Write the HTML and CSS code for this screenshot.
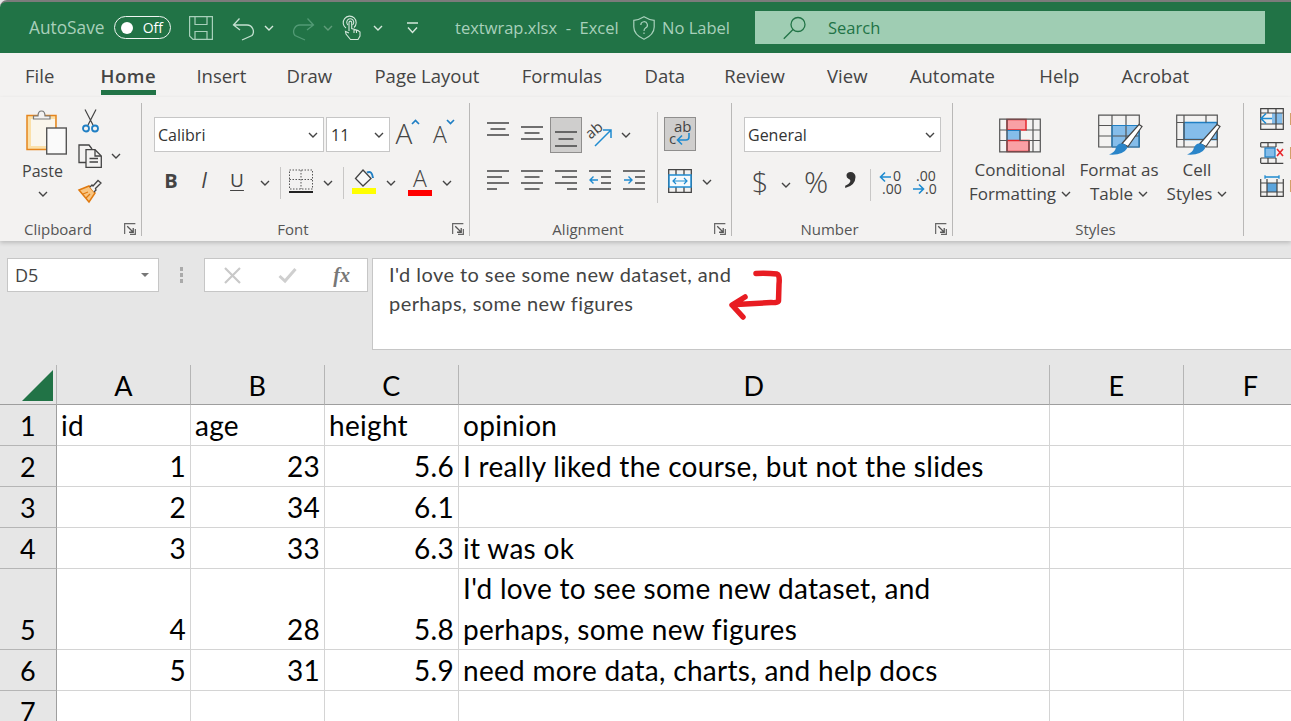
FILE: index.html
```html
<!DOCTYPE html>
<html lang="en">
<head>
<meta charset="utf-8">
<title>textwrap.xlsx - Excel</title>
<link rel="stylesheet" href="styles.css">
</head>
<body>
<svg class="defs" width="0" height="0">
  <symbol id="chev" viewBox="0 0 10 6"><path d="M1 1l4 4 4-4" fill="none" stroke="#444" stroke-width="1.4"/></symbol>
  <symbol id="chevw" viewBox="0 0 10 6"><path d="M1 1l4 4 4-4" fill="none" stroke="#d5e8dc" stroke-width="1.4"/></symbol>
  <symbol id="launch" viewBox="0 0 13 13"><path d="M.7 12V.7H12.3M12.3 6.500V12.300H6.500" fill="none" stroke="#666" stroke-width="1.300"/><path d="M3.500 3.500l6 6M10 5.500V10H5.500" fill="none" stroke="#555" stroke-width="1.400"/></symbol>
</svg>

<header class="titlebar">
  <span class="t-autosave">AutoSave</span>
  <span class="toggle"><i class="knob"></i><span>Off</span></span>
  <svg class="t-save" width="24" height="24" viewBox="0 0 24 24" fill="none" stroke="#a8d0bb" stroke-width="1.200"><path d="M.6.600H23.400V23.400H4L.6 20Z"/><path d="M6 .6V8.500H18V.6M6 23.400V15.500H18V23.400"/></svg>
  <svg class="t-undo" width="24" height="24" viewBox="0 0 24 24" fill="none" stroke="#c4e0d0" stroke-width="1.300"><path d="M2 9H15A6.500 6.500 0 0 1 20 19.500L10 24M7.500 2.500L1.500 9 8 14"/></svg>
  <svg class="t-chev"><use href="#chevw"/></svg>
  <svg class="t-redo" width="24" height="24" viewBox="0 0 24 24" fill="none" stroke="#529a75" stroke-width="1.300"><path d="M22 9H9A6.500 6.500 0 0 0 4 19.500L14 24M16.500 2.500L22.500 9 16 14"/></svg>
  <svg class="t-chev t-chev-dim"><use href="#chevw"/></svg>
  <svg class="t-touch" width="18" height="24" viewBox="0 0 18 24" fill="none" stroke="#d5e8dc" stroke-width="1.100"><path d="M3 12A6.500 6.500 0 1 1 11 11.500M5 9A3.500 3.500 0 1 1 9.500 9"/><path d="M6 15V6.500A1.300 1.300 0 0 1 8.700 6.500V12.500L15 14.500 17 16V20L15 23.500H7.500L3 18 2.500 15.500 6 17M11 13V17M13.500 14V17"/></svg>
  <svg class="t-chev t-chev-3"><use href="#chevw"/></svg>
  <svg class="t-custom" width="11" height="12" viewBox="0 0 11 12" fill="none" stroke="#d5e8dc" stroke-width="1.400"><path d="M0 1H11M1 5.500l4.500 5 4.500-5"/></svg>
  <span class="t-file">textwrap.xlsx&nbsp; - &nbsp;Excel</span>
  <svg class="t-shield" width="22" height="24" viewBox="0 0 22 24" fill="none" stroke="#a8d0bb" stroke-width="1.200"><path d="M11 .8Q16 4 21.200 4.300V11C21.200 17 16 21 11 23.300 6 21 .8 17 .8 11V4.300Q6 4 11 .8Z"/><path d="M7.800 9A3.300 3.300 0 1 1 12.500 12C11.300 12.800 11 13.500 11 15M11 16.500V18"/></svg>
  <span class="t-label">No Label</span>
  <div class="search">
    <svg width="24" height="24" viewBox="0 0 24 24" fill="none" stroke="#217346" stroke-width="1.300"><circle cx="15" cy="8.500" r="7"/><path d="M10 13.500L.8 22.800"/></svg>
    <span>Search</span>
  </div>
</header>

<nav class="tabs">
  <span class="tab">File</span>
  <span class="tab tab-on">Home</span>
  <span class="tab tab-insert">Insert</span>
  <span class="tab">Draw</span>
  <span class="tab">Page Layout</span>
  <span class="tab">Formulas</span>
  <span class="tab tab-data">Data</span>
  <span class="tab">Review</span>
  <span class="tab">View</span>
  <span class="tab tab-auto">Automate</span>
  <span class="tab">Help</span>
  <span class="tab">Acrobat</span>
</nav>

<section class="ribbon">
  <!-- Clipboard -->
  <div class="group g-clip">
    <div class="g-body clip-body">
      <div class="paste">
        <svg class="paste-ic" width="41" height="46" viewBox="0 0 41 46">
          <rect x="1" y="5.500" width="29" height="34" fill="#fbe0a8" stroke="#e5851d" stroke-width="1.500"/>
          <rect x="5" y="9" width="24" height="27" fill="#faf6ec"/>
          <path d="M7.500 9V6H12Q12 1 15.500 1T19 6H24V9Z" fill="#f3f2f1" stroke="#777" stroke-width="1.200"/>
          <rect x="20.700" y="18" width="19.600" height="26" fill="#fafafa" stroke="#555" stroke-width="1.400"/>
        </svg>
        <span>Paste</span>
        <svg class="chev"><use href="#chev"/></svg>
      </div>
      <div class="clip-tools">
        <div class="clip-row">
          <svg width="17" height="24" viewBox="0 0 17 24" fill="none"><path d="M3 .5L11 16M14 .5L6 16" stroke="#444" stroke-width="1.200"/><circle cx="4" cy="19.500" r="3" stroke="#1f7fc4" stroke-width="1.800"/><circle cx="13" cy="19.500" r="3" stroke="#1f7fc4" stroke-width="1.800"/></svg>
        </div>
        <div class="clip-row">
          <svg width="24" height="24" viewBox="0 0 24 24" fill="none" stroke="#444" stroke-width="1.300"><path d="M8 18.500H1V1H11L14 5"/><path d="M8 5.700H17L23.300 12V23.300H8Z" fill="#f3f2f1"/><path d="M17 5.700V12H23M11.500 14.500H20M11.500 18H20"/></svg>
          <svg class="chev"><use href="#chev"/></svg>
        </div>
        <div class="clip-row">
          <svg width="24" height="24" viewBox="0 0 24 24" fill="none"><path d="M1 11L11 7 17 14 11 23Z" fill="#f8c582" stroke="#e07a10" stroke-width="1.500"/><path d="M5 15L10 13M8 19L12 15" stroke="#e07a10" stroke-width="1.300"/><path d="M12 8L14 6 15 7 20 1.500 23 4 17.500 9.500 18 11 16 13" fill="#f3f2f1" stroke="#444" stroke-width="1.300"/></svg>
        </div>
      </div>
    </div>
    <footer class="g-foot"><span>Clipboard</span><svg class="launch"><use href="#launch"/></svg></footer>
  </div>

  <!-- Font -->
  <div class="group g-font">
    <div class="g-body pad-12">
      <div class="r-top font-top">
        <div class="select sel-font"><span>Calibri</span><svg class="chev"><use href="#chev"/></svg></div>
        <div class="select sel-size"><span>11</span><svg class="chev"><use href="#chev"/></svg></div>
        <div class="cell grow"><span class="glyph-a">A</span><svg width="9" height="6" viewBox="0 0 9 6"><path d="M1 5l3.500-3.500L8 5" fill="none" stroke="#1f7fc4" stroke-width="1.700"/></svg></div>
        <div class="cell shrink"><span class="glyph-a small">A</span><svg width="9" height="6" viewBox="0 0 9 6"><path d="M1 1l3.500 3.500L8 1" fill="none" stroke="#1f7fc4" stroke-width="1.700"/></svg></div>
      </div>
      <div class="r-bot font-bot">
        <span class="cell fmt bold">B</span>
        <span class="cell fmt ital">I</span>
        <span class="cell fmt under">U</span>
        <span class="cell"><svg class="chev"><use href="#chev"/></svg></span>
        <span class="cell"><i class="vsep"></i></span>
        <span class="cell">
          <svg width="24" height="24" viewBox="0 0 24 24" fill="none" stroke="#555" stroke-width="1" stroke-dasharray="1.500 1.500"><path d="M.5 1H23.500V20H.5ZM12 1V20M.5 10.500H23.500"/><path d="M0 23H24" stroke="#222" stroke-width="2" stroke-dasharray="none"/></svg>
        </span>
        <span class="cell"><svg class="chev"><use href="#chev"/></svg></span>
        <span class="cell"><i class="vsep"></i></span>
        <span class="cell">
          <svg width="24" height="25" viewBox="0 0 24 25" fill="none"><path d="M11 1L19 9.500 11 17 3.500 9.500Z" stroke="#444" stroke-width="1.300" fill="#f8f8f8"/><path d="M15 3.500Q20 1 21 9" stroke="#1f7fc4" stroke-width="2"/><rect y="19" width="24" height="6" fill="#ff0"/></svg>
        </span>
        <span class="cell"><svg class="chev"><use href="#chev"/></svg></span>
        <span class="cell col-a"><span class="letter-a">A</span><i class="bar-red"></i></span>
        <span class="cell"><svg class="chev"><use href="#chev"/></svg></span>
      </div>
    </div>
    <footer class="g-foot"><span>Font</span><svg class="launch"><use href="#launch"/></svg></footer>
  </div>

  <!-- Alignment -->
  <div class="group g-align">
    <div class="g-body align-body">
      <div class="align-left">
        <div class="r-top align-top">
          <span class="cell"><svg width="22" height="34" viewBox="0 0 22 34" stroke="#444" stroke-width="1.400"><path d="M0 5H22M3.500 11H18.500M0 17H22"/></svg></span>
          <span class="cell"><svg width="22" height="34" viewBox="0 0 22 34" stroke="#444" stroke-width="1.400"><path d="M0 9H22M3.500 15H18.500M0 21H22"/></svg></span>
          <span class="cell on"><svg width="22" height="34" viewBox="0 0 22 34" stroke="#444" stroke-width="1.400"><path d="M0 14H22M3.500 21H18.500M0 28H22"/></svg></span>
          <span class="cell"><svg width="24" height="24" viewBox="0 0 24 24" fill="none"><text class="svg-txt" x="-1" y="13" font-size="15" transform="rotate(-40 6 10)" fill="#444">ab</text><path d="M7 23L23 7M15 7H23V15" stroke="#1f8bd0" stroke-width="1.500"/></svg></span>
          <span class="cell"><svg class="chev"><use href="#chev"/></svg></span>
        </div>
        <div class="r-bot align-bot">
          <span class="cell"><svg width="22" height="21" viewBox="0 0 22 21" stroke="#444" stroke-width="1.400"><path d="M0 1H22M0 7H15M0 13H22M0 19H10"/></svg></span>
          <span class="cell"><svg width="22" height="21" viewBox="0 0 22 21" stroke="#444" stroke-width="1.400"><path d="M0 1H22M3.500 7H18.500M0 13H22M3.500 19H18.500"/></svg></span>
          <span class="cell"><svg width="22" height="21" viewBox="0 0 22 21" stroke="#444" stroke-width="1.400"><path d="M0 1H22M7 7H22M0 13H22M12 19H22"/></svg></span>
          <span class="cell"><svg width="22" height="21" viewBox="0 0 22 21" fill="none" stroke-width="1.400"><path d="M0 1H22M12 7H22M12 13H22M0 19H22" stroke="#444"/><path d="M9 10H1M4.500 6.500L1 10l3.500 3.500" stroke="#1f8bd0"/></svg></span>
          <span class="cell"><svg width="22" height="21" viewBox="0 0 22 21" fill="none" stroke-width="1.400"><path d="M0 1H22M12 7H22M12 13H22M0 19H22" stroke="#444"/><path d="M1 10H9M5.500 6.500L9 10l-3.500 3.500" stroke="#1f8bd0"/></svg></span>
        </div>
      </div>
      <i class="vsep tall"></i>
      <div class="align-right">
        <div class="wrap-btn on">
          <svg width="24" height="28" viewBox="0 0 24 28" fill="none"><text class="svg-txt" x="6" y="12" font-size="15" fill="#444">ab</text><text class="svg-txt" x="1" y="24" font-size="15" fill="#444">c</text><path d="M21 13V17A3 3 0 0 1 18 20H10M14 15.500L9.500 20 14 24.500" stroke="#1f8bd0" stroke-width="1.600"/></svg>
        </div>
        <div class="r-bot merge-row">
          <span class="cell"><svg width="24" height="24" viewBox="0 0 24 24" fill="none"><path d="M.7.7H23.300V23.300H.7ZM8 .7V6M16 .7V6M8 18V23.300M16 18V23.300" stroke="#444" stroke-width="1.300"/><rect x="1" y="6" width="22" height="12" fill="#f5fafd" stroke="#1f8bd0" stroke-width="1.500"/><path d="M5 12H19M8 9l-3 3 3 3M16 9l3 3-3 3" stroke="#1f8bd0" stroke-width="1.200"/></svg></span>
          <span class="cell"><svg class="chev"><use href="#chev"/></svg></span>
        </div>
      </div>
    </div>
    <footer class="g-foot"><span>Alignment</span><svg class="launch"><use href="#launch"/></svg></footer>
  </div>

  <!-- Number -->
  <div class="group g-num">
    <div class="g-body pad-12">
      <div class="r-top">
        <div class="select sel-num"><span>General</span><svg class="chev"><use href="#chev"/></svg></div>
      </div>
      <div class="r-bot num-bot">
        <span class="cell sym dollar">$</span>
        <span class="cell"><svg class="chev"><use href="#chev"/></svg></span>
        <span class="cell sym pct">%</span>
        <span class="cell comma">,</span>
        <span class="cell"><i class="vsep"></i></span>
        <span class="cell"><svg width="24" height="26" viewBox="0 0 24 26" fill="none"><text class="svg-txt" x="14" y="11" font-size="14" fill="#444">0</text><text class="svg-txt" x="3" y="24" font-size="14" fill="#444">.00</text><path d="M12 7H2M6 2.500L1.500 7 6 11.500" stroke="#1f8bd0" stroke-width="1.600"/></svg></span>
        <span class="cell"><svg width="24" height="26" viewBox="0 0 24 26" fill="none"><text class="svg-txt" x="4" y="11" font-size="14" fill="#444">.00</text><text class="svg-txt" x="13" y="24" font-size="14" fill="#444">.0</text><path d="M1 19H11M7 14.500L11.500 19 7 23.500" stroke="#1f8bd0" stroke-width="1.600"/></svg></span>
      </div>
    </div>
    <footer class="g-foot"><span>Number</span><svg class="launch"><use href="#launch"/></svg></footer>
  </div>

  <!-- Styles -->
  <div class="group g-styles">
    <div class="g-body styles-body">
      <div class="big b-cf">
        <svg width="42" height="34" viewBox="0 0 42 34" fill="none">
          <rect x="8" y="1" width="19" height="10.500" fill="#f9a0a5" stroke="#e3262c" stroke-width="1.500"/>
          <rect x="8" y="12" width="13" height="10" fill="#85bdea" stroke="#1f7fc4" stroke-width="1"/>
          <rect x="8" y="22" width="22" height="11" fill="#f9a0a5" stroke="#e3262c" stroke-width="1.500"/>
          <path d="M.7.7H41.300V33.300H.7ZM.7 11.500H8M.7 22H8M8 .7V33M21 12V22H41M30 11.500H41M30 22V33M34 .7V33M27 11.500H34" stroke="#555" stroke-width="1.200"/>
        </svg>
        <span>Conditional</span>
        <span>Formatting <svg class="chev"><use href="#chev"/></svg></span>
      </div>
      <div class="big b-ft">
        <svg width="45" height="42" viewBox="0 0 45 42" fill="none">
          <path d="M14 11H42V32H14Z" fill="#85bdea"/>
          <path d="M.7.7H41.300V32.500H.7ZM.7 11H41M.7 21.500H41M14 .7V32.500M28 .7V32.500" stroke="#555" stroke-width="1.200"/>
          <path d="M14 11H41M14 11V32.500M41 11V32.500H14" stroke="#1f7fc4" stroke-width="1.200"/>
          <path d="M24 29L41 10 44 12 30 32Z" fill="#fff" stroke="#444" stroke-width="1.200"/>
          <path d="M23 29Q29 29 29 34 25 41 11 40 17 38 18 33 20 29 23 29Z" fill="#2a85c9"/>
        </svg>
        <span>Format as</span>
        <span>Table <svg class="chev"><use href="#chev"/></svg></span>
      </div>
      <div class="big b-cs">
        <svg width="45" height="42" viewBox="0 0 45 42" fill="none">
          <rect x="8" y="8" width="33" height="17" fill="#85bdea" stroke="#1f7fc4" stroke-width="1.500"/>
          <path d="M.7.7H41.300V32.500H.7ZM.7 8H8M8 .7V32.500M.7 25H41M30 .7V8" stroke="#555" stroke-width="1.200"/>
          <path d="M24 29L41 10 44 12 30 32Z" fill="#fff" stroke="#444" stroke-width="1.200"/>
          <path d="M23 29Q29 29 29 34 25 41 11 40 17 38 18 33 20 29 23 29Z" fill="#2a85c9"/>
        </svg>
        <span>Cell</span>
        <span>Styles <svg class="chev"><use href="#chev"/></svg></span>
      </div>
    </div>
    <footer class="g-foot"><span>Styles</span></footer>
  </div>

  <!-- Cells -->
  <div class="group g-cells">
    <div class="cells-body">
      <div class="cells-row">
        <svg width="24" height="22" viewBox="0 0 24 22" fill="none"><rect x="12" y="5" width="10" height="11" fill="#85bdea"/><path d="M.7.7H23.300V21.300H.7ZM.7 5H23M.7 16H23M8 .7V5M16 .7V21" stroke="#444" stroke-width="1.200"/><path d="M12 10.500H1M6 5.500L1 10.500l5 5" stroke="#1f8bd0" stroke-width="1.600"/></svg>
        <span>Insert</span>
      </div>
      <div class="cells-row">
        <svg width="24" height="22" viewBox="0 0 24 22" fill="none"><path d="M.7.7H23.300M.7 21.300H23.300M.7.7V5M.7 16V21M8 .7V5M16 .7V5M8 16V21M16 16V21M.7 5H16M.7 16H16" stroke="#444" stroke-width="1.200"/><rect x="5" y="6" width="10" height="9" fill="#85bdea" stroke="#1f7fc4" stroke-width="1.200"/><path d="M17 7l6 7M23 7l-6 7" stroke="#e8262c" stroke-width="1.600"/></svg>
        <span>Delete</span>
      </div>
      <div class="cells-row">
        <svg width="24" height="22" viewBox="0 0 24 22" fill="none"><rect x="7" y="8" width="10" height="9" fill="#5aa4dc"/><path d="M.7 4V21.300H23.300V4M.7 8H23M.7 17H23M7 4V21M17 4V21" stroke="#444" stroke-width="1.200"/><path d="M5 2H19M5 .3V3.700M19 .3V3.700" stroke="#1f8bd0" stroke-width="1.300"/></svg>
        <span>Format</span>
      </div>
    </div>
  </div>
</section>

<section class="fbar">
  <div class="namebox"><span>D5</span><i class="caret"></i></div>
  <div class="grip"><i></i><i></i><i></i></div>
  <div class="fnbox">
    <svg width="17" height="17" viewBox="0 0 17 17" stroke="#c9c9c9" stroke-width="2.200"><path d="M1 1L16 16M16 1L1 16"/></svg>
    <svg width="19" height="15" viewBox="0 0 19 15" fill="none" stroke="#cfcfcf" stroke-width="3"><path d="M1.500 8L7 13 17.500 1"/></svg>
    <span class="fx">fx</span>
  </div>
  <div class="finput">
    <p>I'd love to see some new dataset, and<br>perhaps, some new figures</p>
    <svg class="redarrow" width="60" height="54" viewBox="0 0 60 54" fill="none" stroke="#e81c22" stroke-width="5.500" stroke-linecap="round" stroke-linejoin="round"><path d="M29 3.500Q40 3 50 4 53 5 52 14L51.500 31Q50 33 44 32.500L9 34.500M18 27L5 35 16 47"/></svg>
  </div>
</section>

<section class="sheet">
  <div class="corner"><svg width="31" height="31" viewBox="0 0 31 31"><path d="M31 0V31H0Z" fill="#217346"/></svg></div>
  <div class="ch"><span>A</span></div><div class="ch"><span>B</span></div><div class="ch"><span>C</span></div><div class="ch"><span>D</span></div><div class="ch"><span>E</span></div><div class="ch"><span>F</span></div>

  <div class="rh"><span>1</span></div><div class="c"><span>id</span></div><div class="c"><span>age</span></div><div class="c"><span>height</span></div><div class="c"><span>opinion</span></div><div class="c"></div><div class="c"></div>
  <div class="rh"><span>2</span></div><div class="c n"><span>1</span></div><div class="c n"><span>23</span></div><div class="c n"><span>5.6</span></div><div class="c"><span>I really liked the course, but not the slides</span></div><div class="c"></div><div class="c"></div>
  <div class="rh"><span>3</span></div><div class="c n"><span>2</span></div><div class="c n"><span>34</span></div><div class="c n"><span>6.1</span></div><div class="c"></div><div class="c"></div><div class="c"></div>
  <div class="rh"><span>4</span></div><div class="c n"><span>3</span></div><div class="c n"><span>33</span></div><div class="c n"><span>6.3</span></div><div class="c"><span>it was ok</span></div><div class="c"></div><div class="c"></div>
  <div class="rh"><span>5</span></div><div class="c n"><span>4</span></div><div class="c n"><span>28</span></div><div class="c n"><span>5.8</span></div><div class="c"><span>I'd love to see some new dataset, and<br>perhaps, some new figures</span></div><div class="c"></div><div class="c"></div>
  <div class="rh"><span>6</span></div><div class="c n"><span>5</span></div><div class="c n"><span>31</span></div><div class="c n"><span>5.9</span></div><div class="c"><span>need more data, charts, and help docs</span></div><div class="c"></div><div class="c"></div>
  <div class="rh"><span>7</span></div><div class="c"></div><div class="c"></div><div class="c"></div><div class="c"></div><div class="c"></div><div class="c"></div>
</section>
</body>
</html>
```
FILE: styles.css
```css
* { box-sizing: border-box; }
html, body { margin: 0; padding: 0; }
body {
  width: 1291px; height: 721px; overflow: hidden; background: #e6e6e6;
  font-family: "Open Sans", "Noto Sans", sans-serif; color: #444;
}
.defs { position: absolute; }
svg { display: block; flex: none; overflow: visible; }
i { display: block; font-style: normal; }
.svg-txt { font-family: "Open Sans", sans-serif; }
.chev { width: 10px; height: 6px; }

/* Title bar */
.titlebar {
  height: 53px; background: #217346; border-top: 2px solid #7b7b7b;
  border-top-left-radius: 7px; display: flex; align-items: center;
  padding-left: 29px; color: #a8d0bb; font-size: 16.500px;
}
.t-autosave { width: 85px; font-size: 17.300px; }
.toggle {
  width: 57px; height: 23px; border: 1.500px solid #eef6f1; border-radius: 12px;
  display: flex; align-items: center; padding: 0 7px 0 6px; justify-content: space-between;
  color: #fff; font-size: 14px;
}
.knob { width: 12px; height: 12px; border-radius: 50%; background: #fff; }
.t-save { margin-left: 18px; }
.t-undo { margin-left: 19px; }
.t-chev { width: 10px; height: 6px; margin-left: 8px; }
.t-redo { margin-left: 17px; }
.t-chev-dim { opacity: .35; }
.t-touch { margin-left: 10px; }
.t-chev-3 { margin-left: 12px; }
.t-custom { margin-left: 24px; }
.t-file { margin-left: 37px; width: 178px; white-space: nowrap; }
.t-label { margin-left: 7px; width: 93px; }
.search {
  width: 510px; height: 33px; background: #9fcdb3; display: flex; align-items: center;
  padding-left: 28px; gap: 21px; color: #217346;
}

/* Tabs */
.tabs {
  height: 44px; background: #f3f2f1; display: flex; padding-left: 25px; gap: 42.300px;
  font-size: 18.500px; white-space: nowrap;
}
.tab { height: 42px; padding-top: 9px; line-height: 28px; border-bottom: 5px solid transparent; }
.tab-on { border-bottom-color: #217346; font-weight: 600; letter-spacing: .5px; margin: 0 -2px 0 4px; }
.tab-insert { margin-right: -2px; }
.tab-data { margin-right: -3px; }
.tab-auto { margin-right: 2px; }

/* Ribbon */
.ribbon {
  height: 144px; background: #f3f2f1; display: flex; padding: 6px 0 5px;
  box-shadow: 0 2px 4px rgba(0,0,0,.18); position: relative; overflow: hidden;
}
.group { border-right: 1px solid #b9b8b7; display: flex; flex-direction: column; flex: none; }
.g-clip { width: 142px; }
.g-font { width: 328px; }
.g-align { width: 262px; }
.g-num { width: 221px; }
.g-styles { width: 291px; }
.g-cells { flex: 1; border: 0; }
.g-body { height: 120px; }
.g-foot { display: flex; align-items: center; height: 12px; font-size: 15px; color: #555; padding-right: 5px; }
.g-foot span { flex: 1; text-align: center; padding-right: 8px; }
.launch { width: 12px; height: 12px; }
.g-styles .g-foot span { padding-right: 0; }

.cell { display: flex; align-items: center; justify-content: center; }
.pad-12 { padding: 14px 0 0 12px; }
.r-top { display: flex; height: 34px; }
.r-bot { display: grid; height: 32px; margin-top: 15px; align-items: center; }
.r-bot .cell > svg:not(.chev) { margin-bottom: 3px; }
.vsep { width: 1px; height: 32px; background: #c8c7c6; }

.select {
  height: 35px; background: #fff; border: 1px solid #c6c6c6; display: flex; align-items: center;
  padding: 0 5px 0 3px; justify-content: space-between; font-size: 16px; color: #333;
}
.sel-font { width: 170px; margin-right: 2px; }
.sel-size { width: 64px; padding-left: 4px; }
.sel-num { width: 197px; }

/* Clipboard */
.clip-body { display: flex; padding-top: 6px; }
.paste { width: 55px; margin-left: 15px; display: flex; flex-direction: column; align-items: center; }
.paste-ic { margin: 1px 0 0 8px; }
.paste span { line-height: 24px; margin-top: 3px; font-size: 16px; }
.paste .chev { margin-top: 8px; }
.clip-tools { margin-left: 5px; display: flex; flex-direction: column; gap: 11px; }
.clip-row { height: 24px; display: grid; grid-template-columns: 30px 22px; align-items: center; justify-items: center; }

/* Font */
.grow, .shrink { width: 36px; align-items: flex-start; margin-top: -2px; }
.grow svg, .shrink svg { margin: 4px 0 0 -1px; }
.glyph-a { font-size: 28px; line-height: 36px; font-weight: 300; }
.glyph-a.small { font-size: 23px; line-height: 38px; }
.font-bot { grid-template-columns: 34px 32px 34px 22px 8px 33px 21px 10px 32px 21px 38px 15px; }
.fmt { font-size: 20px; margin-bottom: 5px; }
.bold { font-weight: 700; }
.ital { font-style: italic; font-weight: 400; font-size: 21px; }
.under { text-decoration: underline; text-underline-offset: 3px; text-decoration-thickness: 1px; font-weight: 400; font-size: 19px; }
.col-a { flex-direction: column; margin-bottom: 3px; }
.letter-a { font-size: 23px; line-height: 22px; font-weight: 300; }
.bar-red { width: 24px; height: 6px; background: #f00; margin-top: 1px; }

/* Alignment */
.align-body { display: flex; padding: 9px 0 0 11px; }
.align-left { width: 170px; padding-top: 5px; }
.align-top { display: grid; grid-template-columns: 34px 34px 34px 34px 18px; }
.align-bot { grid-template-columns: repeat(5, 34px); }
.on { background: #cfcecd; border: 1px solid #8f8e8d; }
.align-top .on { margin: 0 1px; }
.vsep.tall { height: 91px; margin-left: 6px; }
.align-right { margin-left: 6px; padding-top: 5px; }
.wrap-btn { width: 32px; height: 34px; display: flex; align-items: center; justify-content: center; }
.merge-row { grid-template-columns: 32px 21px; }

/* Number */
.num-bot { grid-template-columns: 32px 20px 40px 30px 8px 33px 34px; }
.sym { font-weight: 300; line-height: 32px; margin-bottom: 5px; }
.dollar { font-size: 29px; }
.pct { font-size: 30px; }
.comma {
  font-family: "Liberation Serif", serif; font-weight: 700; font-size: 52px; line-height: 32px;
  height: 32px; align-self: start; margin-top: -19px; color: #333;
}

/* Styles */
.styles-body { display: flex; padding: 10px 0 0 12px; }
.big { display: flex; flex-direction: column; align-items: center; font-size: 17px; line-height: 24px; white-space: nowrap; }
.big > svg:first-child { height: 45px; }
.big span { display: flex; align-items: center; gap: 5px; }
.b-cf { width: 110px; }
.b-ft { width: 88px; }
.b-ft > svg { margin-left: 3px; }
.b-cs { width: 68px; }
.b-cs > svg { margin-left: 2px; }

/* Cells */
.cells-body { padding: 5px 0 0 16px; display: flex; flex-direction: column; gap: 11.500px; }
.cells-row { height: 22px; display: flex; gap: 5px; align-items: center; font-size: 16px; white-space: nowrap; }

/* Formula bar */
.fbar { height: 124px; display: flex; align-items: flex-start; padding: 17px 0 0 7px; background: #e6e6e6; }
.namebox {
  width: 152px; height: 34px; background: #fff; border: 1px solid #c6c6c6;
  display: flex; align-items: center; justify-content: space-between;
  padding: 0 9px 0 7px; font-size: 18px; color: #444;
}
.caret { border: 4px solid transparent; border-top: 4px solid #777; border-bottom: 0; }
.grip { width: 45px; height: 34px; display: flex; flex-direction: column; align-items: center; justify-content: center; gap: 2px; }
.grip i { width: 3px; height: 4px; background: #aaa; }
.fnbox {
  width: 164px; height: 34px; background: #fff; border: 1px solid #c6c6c6;
  display: flex; align-items: center; justify-content: space-between; padding: 0 17px 0 19px;
}
.fx { font-family: "Liberation Serif", serif; font-style: italic; font-weight: 700; font-size: 20px; color: #777; }
.finput {
  flex: 1; margin-left: 4px; height: 92px; background: #fff; border: 1px solid #c6c6c6; border-right: 0;
  padding: 1px 0 0 16px; position: relative; font-family: Lato, sans-serif; color: #444;
}
.finput p { margin: 0; font-size: 20px; letter-spacing: .44px; line-height: 29px; white-space: nowrap; font-variant-ligatures: none; }
.redarrow { position: absolute; left: 354px; top: 11px; }

/* Sheet */
.sheet {
  display: grid; grid-template-columns: 57px 134px 134px 134px 591px 134px 134px;
  grid-template-rows: 40px 41px 41px 41px 41px 81px 41px 41px;
  width: 1318px; background: #fff; font-family: Lato, sans-serif; color: #000;
  font-size: 28px; letter-spacing: .3px; font-variant-ligatures: none;
}
.corner { background: #e6e6e6; border-right: 1px solid #b5b5b5; border-bottom: 1px solid #9e9e9e; padding: 5px 0 0 22px; }
.ch {
  background: #e6e6e6; border-right: 1px solid #b5b5b5; border-bottom: 1px solid #9e9e9e;
  display: flex; align-items: center; justify-content: center; font-size: 27px;
}
.ch span { margin-top: 2px; }
.rh {
  background: #e6e6e6; border-right: 1px solid #9e9e9e; border-bottom: 1px solid #b5b5b5;
  display: flex; align-items: flex-end; justify-content: center; line-height: 41px; font-size: 27px;
}
.c {
  border-right: 1px solid #d4d4d4; border-bottom: 1px solid #d4d4d4;
  display: flex; align-items: flex-end; padding: 0 4px; line-height: 41px; white-space: nowrap;
}
.c span, .rh span { margin-bottom: -1px; }
.n { justify-content: flex-end; }
```
